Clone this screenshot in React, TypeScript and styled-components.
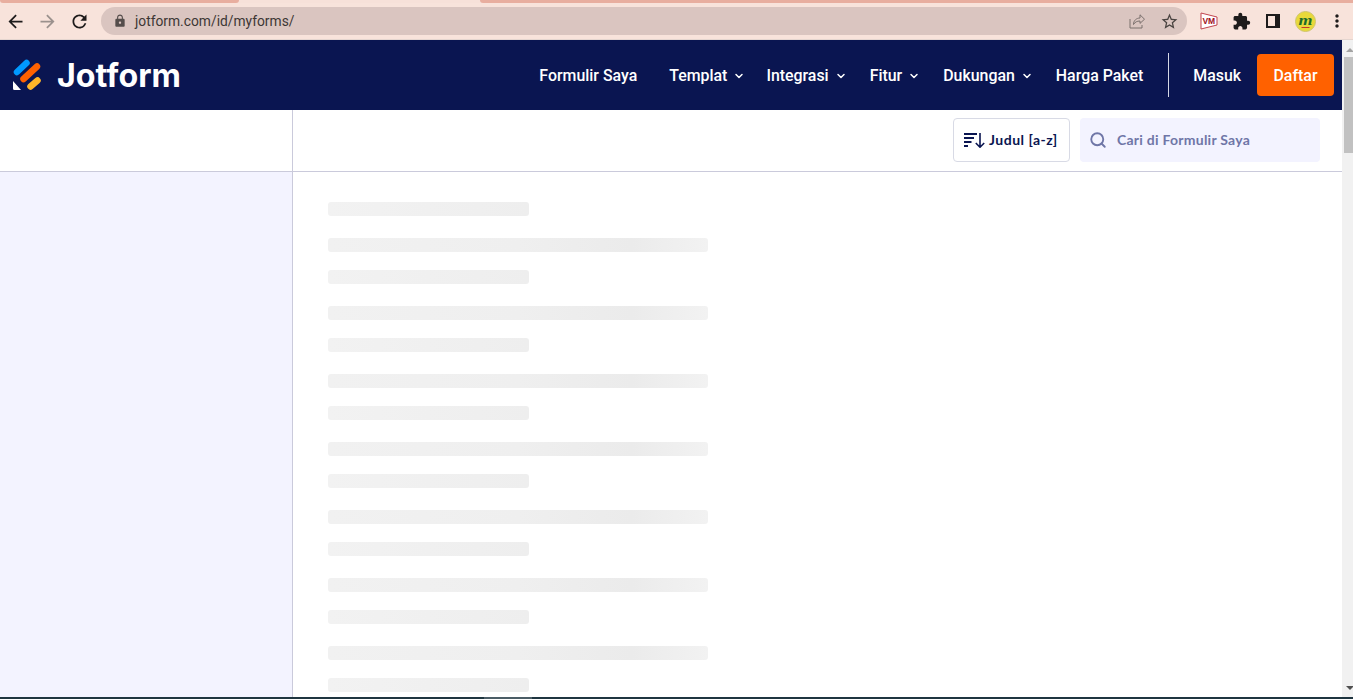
import React from "react";
import styled, { createGlobalStyle } from "styled-components";
import { FiChevronDown, FiSearch } from "react-icons/fi";
import { MdArrowBack, MdArrowForward, MdRefresh, MdLock, MdStarBorder, MdExtension, MdMoreVert } from "react-icons/md";

const GlobalStyle = createGlobalStyle`
  * { box-sizing: border-box; }
  html, body { margin: 0; padding: 0; height: 100%; overflow: hidden; background: #fff; }
  body { font-family: "Roboto", "Liberation Sans", sans-serif; }
`;

const Screen = styled.div`
  width: 1353px;
  height: 699px;
  display: flex;
  flex-direction: column;
  overflow: hidden;
`;

// --- Browser chrome ---
const TabStrip = styled.div`
  height: 3px;
  flex: none;
  background: #f7e1d9;
  display: flex;
  gap: 241px;
  overflow: hidden;
`;

const Tab = styled.div<{ $width: number }>`
  width: ${(p) => p.$width}px;
  flex: none;
  height: 3px;
  background: #e8ae9f;
  border-radius: 0 0 6px 6px;
`;

const Toolbar = styled.div`
  height: 37px;
  flex: none;
  background: #f8e3db;
  border-bottom: 1px solid #e4d5cf;
  display: flex;
  align-items: center;
`;

const NavIcon = styled.span<{ $muted?: boolean }>`
  width: 30px;
  height: 24px;
  display: flex;
  align-items: center;
  justify-content: center;
  font-size: 21px;
  margin-right: 2px;
  color: ${(p) => (p.$muted ? "#9b918d" : "#1e1b1b")};
`;

const Omnibox = styled.div`
  width: 1086px;
  height: 28px;
  border-radius: 14px;
  background: #dac5c0;
  display: flex;
  align-items: center;
  padding: 0 2px 0 12px;
  margin-left: 5px;
`;

const Url = styled.span`
  font: 400 13.8px "Roboto", "Liberation Sans", sans-serif;
  color: #3d3735;
  margin-left: 8px;
  flex: 1;
`;

const OmniAction = styled.span<{ $dark?: boolean }>`
  width: 32px;
  display: flex;
  justify-content: center;
  font-size: 17px;
  color: ${(p) => (p.$dark ? "#4a4441" : "#7a706d")};
`;

const Extensions = styled.div`
  display: flex;
  align-items: center;
  margin-left: 6px;
`;

const ExtSlot = styled.span`
  width: 32px;
  height: 24px;
  display: flex;
  align-items: center;
  justify-content: center;
  color: #1e1b1b;
  font-size: 19px;
`;

// --- Page ---
const Viewport = styled.div`
  flex: 1;
  display: flex;
  min-height: 0;
`;

const Page = styled.div`
  flex: 1;
  min-width: 0;
  display: flex;
  flex-direction: column;
  background: #fff;
`;

const Header = styled.header`
  height: 70px;
  flex: none;
  background: #0a1551;
  display: flex;
  align-items: center;
  padding: 0 8px 0 12px;
`;

const Brand = styled.div`
  display: flex;
  align-items: center;
  gap: 15px;
  flex: 1;
`;

const Wordmark = styled.span`
  font: 700 32.2px "Inter", "Liberation Sans", sans-serif;
  color: #fff;
  line-height: 1;
  padding-top: 2px;
`;

const Menu = styled.nav`
  display: flex;
  align-items: center;
`;

const MenuItem = styled.a<{ $gap: number }>`
  display: flex;
  align-items: center;
  font: 500 15.9px "Roboto", "Liberation Sans", sans-serif;
  color: #fff;
  margin-right: ${(p) => p.$gap}px;
  svg { font-size: 12px; margin-left: 6px; margin-top: 2px; stroke-width: 3; }
`;

const Divider = styled.span`
  width: 1px;
  height: 44px;
  background: #d5d8e6;
  margin: 0 24px 0 25px;
`;

const SignUp = styled.button`
  width: 77px;
  height: 42px;
  border: 0;
  border-radius: 4px;
  background: #ff6100;
  color: #fff;
  font: 500 15.9px "Roboto", "Liberation Sans", sans-serif;
  margin-left: 16px;
`;

const SubBar = styled.div`
  height: 62px;
  flex: none;
  display: grid;
  grid-template-columns: 293px 1fr;
  border-bottom: 1px solid #cacadb;
`;

const SubBarLeft = styled.div`
  border-right: 1px solid #cacadb;
`;

const SubBarRight = styled.div`
  display: flex;
  justify-content: flex-end;
  align-items: flex-start;
  padding: 8px 22px 0 0;
  gap: 10px;
`;

const SortButton = styled.button`
  width: 117px;
  height: 44px;
  background: #fff;
  border: 1px solid #d8dae5;
  border-radius: 4px;
  display: flex;
  align-items: center;
  gap: 4px;
  padding: 0 0 2px 10px;
  color: #0a1551;
  font: 700 14px "Lato", "Inter", sans-serif;
  letter-spacing: 0.5px;
  svg { margin-top: 2px; }
`;

const Search = styled.div`
  width: 240px;
  height: 44px;
  background: #f3f3ff;
  border-radius: 4px;
  display: flex;
  align-items: center;
  padding: 0 0 2px 9px;
  gap: 10px;
  color: #6f76a7;
  font: 700 14px "Lato", "Inter", sans-serif;
  letter-spacing: 0.25px;
  svg { font-size: 18px; stroke-width: 2.5; margin-top: 2px; }
`;

const Body = styled.div`
  flex: 1;
  min-height: 0;
  display: grid;
  grid-template-columns: 293px 1fr;
  overflow: hidden;
`;

const Sidebar = styled.aside`
  background: #f3f3ff;
  border-right: 1px solid #cacadb;
`;

const SkeletonList = styled.div`
  padding: 30px 0 0 35px;
  display: flex;
  flex-direction: column;
`;

const Bar = styled.div<{ $wide?: boolean }>`
  height: 14px;
  flex: none;
  width: ${(p) => (p.$wide ? 380 : 201)}px;
  border-radius: 3px;
  margin-bottom: ${(p) => (p.$wide ? 18 : 22)}px;
  background: ${(p) =>
    p.$wide
      ? "linear-gradient(90deg, #f1f1f1 0%, #efefef 50%, #ebebeb 80%, #f2f2f2 100%)"
      : "linear-gradient(90deg, #f2f2f2 0%, #eeeeee 100%)"};
`;

const Scrollbar = styled.div`
  width: 11px;
  flex: none;
  background: #f1f1f1;
  display: flex;
  flex-direction: column;
  padding-left: 2px;
  overflow: hidden;
`;

const ScrollArrow = styled.span<{ $down?: boolean }>`
  width: 0;
  height: 0;
  flex: none;
  margin-left: 2px;
  border-left: 4px solid transparent;
  border-right: 4px solid transparent;
  ${(p) =>
    p.$down
      ? `border-top: 4px solid #505050; margin-top: auto; margin-bottom: 7px;`
      : `border-bottom: 4px solid #a3a3a3; margin-top: 8px; margin-bottom: 5px;`}
`;

const ScrollThumb = styled.div`
  width: 9px;
  height: 96px;
  flex: none;
  background: #c1c1c1;
`;

const Taskbar = styled.div`
  height: 2px;
  flex: none;
  background: #1f3540;
  display: flex;
`;

const TaskbarItem = styled.span`
  width: 48px;
  margin-left: 484px;
  background: #4b5d66;
`;

function Logo() {
  return (
    <svg width="30" height="32" viewBox="0 0 30 32" fill="none" strokeWidth="6.5" strokeLinecap="round" aria-hidden="true">
      <path d="M1 22 L9 31 H2.5 a1.5 1.5 0 0 1 -1.5 -1.5 Z" fill="#fff" />
      <path d="M5 13 L14.5 4" stroke="#0099ff" />
      <path d="M11.5 20 L25 7.5" stroke="#ff6100" />
      <path d="M18.5 27.5 L25.5 21.5" stroke="#ffb629" />
    </svg>
  );
}

function SortIcon() {
  return (
    <svg width="21" height="15" viewBox="0 0 21 15" fill="none" stroke="#0a1551" aria-hidden="true">
      <path d="M0 1h13M0 5h10M0 9h7.5M0 13h4" strokeWidth="2" />
      <path d="M16 0v14M11.8 10l4.2 4.2 4.2-4.2" strokeWidth="1.6" />
    </svg>
  );
}

function ShareIcon() {
  return (
    <svg width="16" height="16" viewBox="0 0 16 16" fill="none" stroke="currentColor" strokeWidth="1" aria-hidden="true">
      <path d="M1 6v9h12v-3" />
      <path d="M4.5 11.5c0-4 3-6.5 6.5-6.5V1.8l4.5 4.4-4.5 4.2V8c-3 0-5 1-6.5 3.5z" />
    </svg>
  );
}

function VmBadge() {
  return (
    <svg width="18" height="18" viewBox="0 0 18 18" aria-hidden="true">
      <path d="M1 1 L17 5 V13 L1 17 Z" fill="#fff" stroke="#c1454f" strokeWidth="1" />
      <text x="2.4" y="12" fontSize="8.5" fontWeight="700" fontFamily="Liberation Sans" fill="#a0101c">VM</text>
    </svg>
  );
}

function SidePanelIcon() {
  return (
    <svg width="14" height="14" viewBox="0 0 14 14" aria-hidden="true">
      <path fillRule="evenodd" d="M0 0h14v14H0z M2 2v10h7V2z" fill="#1e1b1b" />
    </svg>
  );
}

function Avatar() {
  return (
    <svg width="21" height="21" viewBox="0 0 21 21" aria-hidden="true">
      <circle cx="10.5" cy="10.5" r="10" fill="#e8d93a" stroke="#cfc46e" />
      <text x="3.5" y="14" textLength="14" lengthAdjust="spacingAndGlyphs" fontSize="15" fontStyle="italic" fontWeight="700" fontFamily="Liberation Serif" fill="#1d6b2a">m</text>
      <path d="M6.5 16.5h8" stroke="#c0392b" strokeWidth="1" />
    </svg>
  );
}

const rows = Array.from({ length: 15 }, (_, i) => i);

export default function App() {
  return (
    <Screen>
      <GlobalStyle />
      <TabStrip>
        <Tab $width={239} />
        <Tab $width={890} />
      </TabStrip>
      <Toolbar>
        <NavIcon><MdArrowBack /></NavIcon>
        <NavIcon $muted><MdArrowForward /></NavIcon>
        <NavIcon><MdRefresh /></NavIcon>
        <Omnibox>
          <MdLock size={14} color="#544d4b" />
          <Url>jotform.com/id/myforms/</Url>
          <OmniAction><ShareIcon /></OmniAction>
          <OmniAction $dark><MdStarBorder size={19} /></OmniAction>
        </Omnibox>
        <Extensions>
          <ExtSlot><VmBadge /></ExtSlot>
          <ExtSlot><MdExtension /></ExtSlot>
          <ExtSlot><SidePanelIcon /></ExtSlot>
          <ExtSlot><Avatar /></ExtSlot>
          <ExtSlot><MdMoreVert size={20} /></ExtSlot>
        </Extensions>
      </Toolbar>
      <Viewport>
        <Page>
          <Header>
            <Brand>
              <Logo />
              <Wordmark>Jotform</Wordmark>
            </Brand>
            <Menu>
              <MenuItem $gap={32}>Formulir Saya</MenuItem>
              <MenuItem $gap={21}>Templat<FiChevronDown /></MenuItem>
              <MenuItem $gap={23}>Integrasi<FiChevronDown /></MenuItem>
              <MenuItem $gap={23}>Fitur<FiChevronDown /></MenuItem>
              <MenuItem $gap={23}>Dukungan<FiChevronDown /></MenuItem>
              <MenuItem $gap={0}>Harga Paket</MenuItem>
              <Divider />
              <MenuItem $gap={0}>Masuk</MenuItem>
              <SignUp>Daftar</SignUp>
            </Menu>
          </Header>
          <SubBar>
            <SubBarLeft />
            <SubBarRight>
              <SortButton><SortIcon />Judul [a-z]</SortButton>
              <Search><FiSearch />Cari di Formulir Saya</Search>
            </SubBarRight>
          </SubBar>
          <Body>
            <Sidebar />
            <SkeletonList>
              <Bar />
              {rows.map((i) => (
                <React.Fragment key={i}>
                  <Bar $wide />
                  <Bar />
                </React.Fragment>
              ))}
            </SkeletonList>
          </Body>
        </Page>
        <Scrollbar>
          <ScrollArrow />
          <ScrollThumb />
          <ScrollArrow $down />
        </Scrollbar>
      </Viewport>
      <Taskbar><TaskbarItem /></Taskbar>
    </Screen>
  );
}
